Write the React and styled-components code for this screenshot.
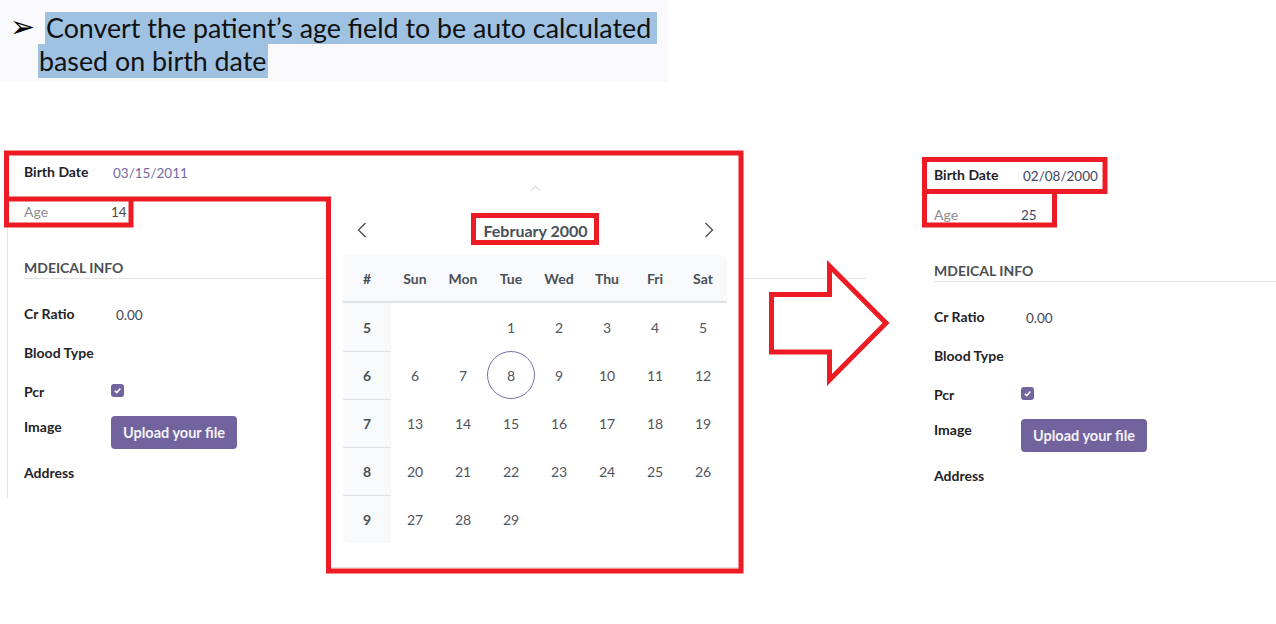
import React from "react";
import styled, { createGlobalStyle } from "styled-components";

const GlobalStyle = createGlobalStyle`
  html, body { margin: 0; padding: 0; background: #ffffff; }
  body { font-family: "Lato", "Noto Sans", sans-serif; color: #212529; }
  * { box-sizing: border-box; }
`;

const Page = styled.div`
  position: relative;
  width: 1276px;
  height: 624px;
  overflow: hidden;
  background: #ffffff;
`;

/* ---------- slide excerpt ---------- */
const SlideBanner = styled.div`
  position: relative;
  width: 668px;
  height: 82px;
  padding-top: 12px;
  background: #fafafc;
  font-family: "Lato", "Noto Sans", sans-serif;
  font-size: 26.8px;
  color: #111111;
`;

const Bullet = styled.span`
  position: absolute;
  left: 10px;
  top: 11px;
  font-family: "DejaVu Sans", sans-serif;
  font-size: 30px;
  line-height: 32px;
  color: #000000;
`;

const SlideLine = styled.span`
  display: block;
  width: fit-content;
  margin-left: ${(p) => p.$indent}px;
  padding: 0 ${(p) => p.$tail}px 0 1px;
  height: ${(p) => p.$h}px;
  line-height: ${(p) => p.$h}px;
  background: #9fc2e3;
  white-space: nowrap;
`;

/* ---------- form sheets ---------- */
const Workspace = styled.div`
  display: flex;
  align-items: flex-start;
  gap: 51px;
  padding-left: 7px;
  margin-top: 70px;
`;

const Sheet = styled.div`
  position: relative;
  width: ${(p) => p.$w}px;
  margin-top: ${(p) => p.$offset}px;
  padding: 0 0 6px 16px;
  border-left: 1px solid ${(p) => (p.$bordered ? "#e4e4e4" : "transparent")};
  font-size: 14px;
`;

const FieldRow = styled.div`
  display: grid;
  grid-template-columns: 87px auto;
  align-items: ${(p) => (p.$top ? "start" : "center")};
  height: ${(p) => p.$h}px;
  padding-top: ${(p) => p.$pt || 0}px;
`;

const FieldLabel = styled.div`
  font-weight: ${(p) => (p.$muted ? 400 : 700)};
  color: ${(p) => (p.$muted ? "#8d8d8d" : "#1f2328")};
  line-height: 20px;
  padding-top: ${(p) => (p.$top ? 1 : 0)}px;
`;

const FieldValue = styled.div`
  color: ${(p) => p.$color};
  font-size: 13.5px;
  line-height: 20px;
  padding-left: ${(p) => p.$shift || 0}px;
  margin-top: ${(p) => p.$drop || 0}px;
`;

const SectionTitle = styled.div`
  margin-top: 26px;
  margin-bottom: 15px;
  line-height: 20px;
  font-weight: 700;
  color: #4b4f55;
  text-transform: uppercase;
  border-bottom: 1px solid #e3e3e3;
  height: 21px;
`;

const CheckBox = styled.span`
  display: flex;
  align-items: center;
  justify-content: center;
  width: 13px;
  height: 13px;
  margin-top: -3px;
  border-radius: 3px;
  background: #71639e;
`;

const UploadButton = styled.button`
  display: block;
  height: 33px;
  padding: 0 12px;
  border: none;
  border-radius: 4px;
  background: #71639e;
  color: #f4f2f8;
  font-family: "Lato", "Noto Sans", sans-serif;
  font-size: 14.5px;
  font-weight: 700;
  cursor: pointer;
`;

/* ---------- date picker popover ---------- */
const Popover = styled.div`
  position: absolute;
  left: 323px;
  top: 43px;
  width: 408px;
  padding: 17px 12px 24px;
  background: #ffffff;
  border-bottom: 1px solid #dee2e6;
  z-index: 2;
`;

const Caret = styled.span`
  position: absolute;
  left: 201px;
  top: -8px;
  width: 7px;
  height: 7px;
  border-top: 1px solid #d6d6d6;
  border-left: 1px solid #d6d6d6;
  transform: rotate(45deg);
`;

const NavRow = styled.div`
  display: flex;
  align-items: center;
  justify-content: space-between;
  height: 36px;
  margin-bottom: 7px;
  padding: 0 13px 0 14px;
`;

const NavButton = styled.span`
  display: inline-flex;
  width: 10px;
  height: 16px;
  color: #495057;
`;

const MonthTitle = styled.span`
  font-size: 16px;
  font-weight: 700;
  color: #495057;
`;

const CalGrid = styled.div`
  display: grid;
  grid-template-columns: repeat(8, 48px);
  width: 384px;
`;

const HeadRow = styled.div`
  display: contents;
`;

const HeadCell = styled.div`
  height: 48px;
  display: flex;
  align-items: center;
  justify-content: center;
  background: #f8f9fa;
  border-bottom: 2px solid #dee2e6;
  font-weight: 700;
  color: #495057;
  font-size: 14px;
  border-top-left-radius: ${(p) => (p.$first ? 6 : 0)}px;
  border-top-right-radius: ${(p) => (p.$last ? 6 : 0)}px;
`;

const WeekCell = styled.div`
  height: 48px;
  display: flex;
  align-items: center;
  justify-content: center;
  background: #f8f9fa;
  border-top: ${(p) => (p.$first ? "none" : "1px solid #dee2e6")};
  border-bottom-left-radius: ${(p) => (p.$last ? 6 : 0)}px;
  font-weight: 700;
  color: #495057;
`;

const DayCell = styled.div`
  height: 48px;
  display: flex;
  align-items: center;
  justify-content: center;
  color: #4f555c;
`;

const DayMark = styled.span`
  display: flex;
  align-items: center;
  justify-content: center;
  width: 48px;
  height: 48px;
  border-radius: 50%;
  border: 1px solid ${(p) => (p.$selected ? "#7a6ea8" : "transparent")};
`;

/* ---------- annotations ---------- */
const Annotations = styled.svg`
  position: absolute;
  left: 0;
  top: 0;
  pointer-events: none;
  z-index: 5;
`;

const Chevron = ({ dir }) => (
  <svg width="10" height="16" viewBox="0 0 10 16">
    <polyline
      points={dir === "left" ? "8.5,1 1.5,8 8.5,15" : "1.5,1 8.5,8 1.5,15"}
      fill="none"
      stroke="currentColor"
      strokeWidth="1.4"
    />
  </svg>
);

const Check = () => (
  <svg width="9" height="9" viewBox="0 0 10 10">
    <polyline points="2,5.2 4.2,7.3 8.2,2.8" fill="none" stroke="#ffffff" strokeWidth="1.7" />
  </svg>
);

const weeks = [
  [5, [null, null, 1, 2, 3, 4, 5]],
  [6, [6, 7, 8, 9, 10, 11, 12]],
  [7, [13, 14, 15, 16, 17, 18, 19]],
  [8, [20, 21, 22, 23, 24, 25, 26]],
  [9, [27, 28, 29, null, null, null, null]],
];

const headers = ["#", "Sun", "Mon", "Tue", "Wed", "Thu", "Fri", "Sat"];

function DatePicker() {
  return (
    <Popover>
      <Caret />
      <NavRow>
        <NavButton>
          <Chevron dir="left" />
        </NavButton>
        <MonthTitle>February 2000</MonthTitle>
        <NavButton>
          <Chevron dir="right" />
        </NavButton>
      </NavRow>
      <CalGrid>
        <HeadRow>
          {headers.map((h, i) => (
            <HeadCell key={h} $first={i === 0} $last={i === headers.length - 1}>
              {h}
            </HeadCell>
          ))}
        </HeadRow>
        {weeks.map(([wk, days], wi) => (
          <React.Fragment key={wk}>
            <WeekCell $first={wi === 0} $last={wi === weeks.length - 1}>
              {wk}
            </WeekCell>
            {days.map((d, di) => (
              <DayCell key={di}>
                {d !== null && <DayMark $selected={d === 8}>{d}</DayMark>}
              </DayCell>
            ))}
          </React.Fragment>
        ))}
      </CalGrid>
    </Popover>
  );
}

function PatientForm({ birth, age, dateColor, ageColor, width, offset, bordered, children }) {
  return (
    <Sheet $w={width} $offset={offset} $bordered={bordered}>
      <FieldRow $h={40}>
        <FieldLabel>Birth Date</FieldLabel>
        <FieldValue $color={dateColor} $shift={2} $drop={1}>
          {birth}
        </FieldValue>
      </FieldRow>
      <FieldRow $h={40}>
        <FieldLabel $muted>Age</FieldLabel>
        <FieldValue $color={ageColor} $shift={-1}>
          {age}
        </FieldValue>
      </FieldRow>
      <SectionTitle>Mdeical Info</SectionTitle>
      <FieldRow $h={39}>
        <FieldLabel>Cr Ratio</FieldLabel>
        <FieldValue $color="#3f4650" $shift={5} $drop={3}>
          0.00
        </FieldValue>
      </FieldRow>
      <FieldRow $h={39}>
        <FieldLabel>Blood Type</FieldLabel>
        <FieldValue $color="#3f4650" />
      </FieldRow>
      <FieldRow $h={39}>
        <FieldLabel>Pcr</FieldLabel>
        <FieldValue $color="#3f4650">
          <CheckBox>
            <Check />
          </CheckBox>
        </FieldValue>
      </FieldRow>
      <FieldRow $h={42} $top $pt={5}>
        <FieldLabel $top>Image</FieldLabel>
        <FieldValue $color="#3f4650">
          <UploadButton>Upload your file</UploadButton>
        </FieldValue>
      </FieldRow>
      <FieldRow $h={39}>
        <FieldLabel>Address</FieldLabel>
        <FieldValue $color="#3f4650" />
      </FieldRow>
      {children}
    </Sheet>
  );
}

const RED = "#ed1c24";

export default function App() {
  return (
    <>
      <GlobalStyle />
      <Page>
        <SlideBanner>
          <Bullet>➢</Bullet>
          <SlideLine $indent={45} $tail={6} $h={32}>
            Convert the patient’s age field to be auto calculated
          </SlideLine>
          <SlideLine $indent={38} $tail={2} $h={34}>
            based on birth date
          </SlideLine>
        </SlideBanner>

        <Workspace>
          <PatientForm
            birth="03/15/2011"
            age="14"
            dateColor="#76699f"
            ageColor="#4a4a40"
            width={859}
            offset={0}
            bordered
          >
            <DatePicker />
          </PatientForm>
          <PatientForm
            birth="02/08/2000"
            age="25"
            dateColor="#3d4763"
            ageColor="#3d4763"
            width={359}
            offset={3}
          />
        </Workspace>

        <Annotations width="1276" height="624" viewBox="0 0 1276 624">
          <g fill="none" stroke={RED} strokeWidth="5" strokeLinejoin="miter">
            <polygon points="6.5,153 741,153 741,571 328.5,571 328.5,199 6.5,199" />
            <polyline points="6.5,199 6.5,225 131,225 131,199" />
            <rect x="473.5" y="215.5" width="123" height="27" />
            <rect x="924.5" y="159.5" width="180.5" height="32" />
            <polyline points="924.5,191.5 924.5,225 1054.5,225 1054.5,191.5" />
            <polygon points="771.5,294.5 829.5,294.5 829.5,266 886,323 829.5,380 829.5,352 771.5,352" />
          </g>
        </Annotations>
      </Page>
    </>
  );
}
